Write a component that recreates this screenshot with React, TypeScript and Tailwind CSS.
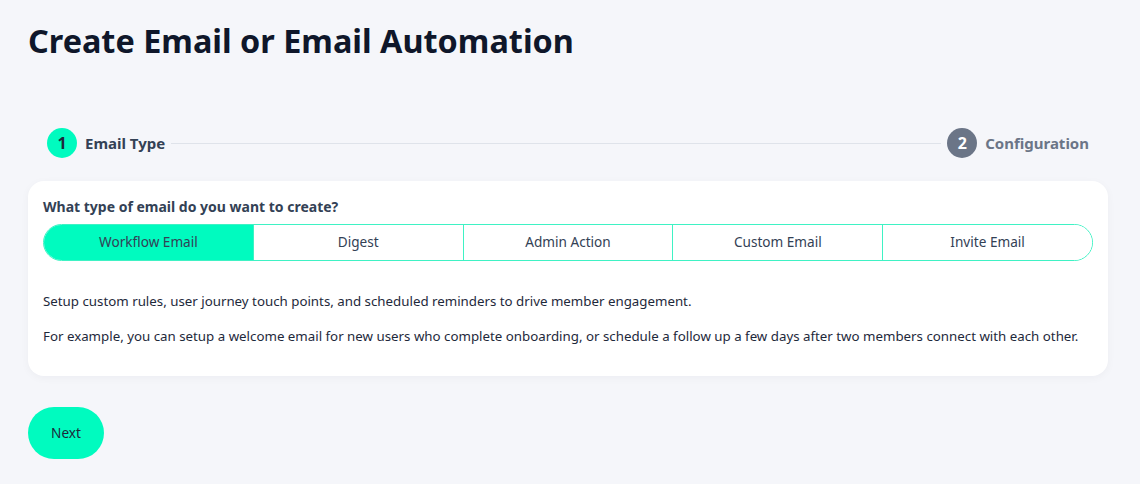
const TYPES = ["Workflow Email", "Digest", "Admin Action", "Custom Email", "Invite Email"];

export default function App() {
  const active = 0;

  return (
    <div className="min-h-screen bg-[#f5f6fa] pl-7 pr-8 pt-[18px] font-['Noto_Sans',sans-serif]">
      <h1 className="text-[32.4px] leading-[44px] font-bold text-[#0f172a]">Create Email or Email Automation</h1>

      {/* Stepper */}
      <div className="mt-[66px] flex items-center px-[19px]">
        <div className="flex items-center gap-2">
          <div className="h-[30px] w-[30px] rounded-full bg-[#00fbbf] flex items-center justify-center text-[16px] font-bold text-[#1e293b]">1</div>
          <span className="text-[15px] font-bold text-[#334155]">Email Type</span>
        </div>
        <div className="mx-1.5 h-px flex-1 bg-[#dfe3ea]" />
        <div className="flex items-center gap-2">
          <div className="h-[30px] w-[30px] rounded-full bg-[#6b7587] flex items-center justify-center text-[16px] font-bold text-white">2</div>
          <span className="text-[15px] font-bold text-[#6b7587]">Configuration</span>
        </div>
      </div>

      {/* Card */}
      <div className="mt-[23px] rounded-2xl bg-white px-[15px] pt-[16px] pb-[30px] shadow-[0_2px_8px_rgba(15,23,42,0.04)]">
        <p className="text-[14px] leading-5 font-bold text-[#334155]">What type of email do you want to create?</p>
        <div className="mt-[7px] flex h-[37px] rounded-full border border-[#3ff2c4] overflow-hidden">
          {TYPES.map((t, i) => (
            <button
              key={t}
              className={`flex-1 text-[13.6px] text-[#334155] ${i > 0 ? "border-l border-[#3ff2c4]" : ""} ${
                i === active ? "bg-[#00fbbf]" : "bg-white"
              }`}
            >
              {t}
            </button>
          ))}
        </div>
        <p className="mt-[30px] text-[13.3px] leading-5 text-[#1e293b]">
          Setup custom rules, user journey touch points, and scheduled reminders to drive member engagement.
        </p>
        <p className="mt-[15px] text-[13.3px] leading-5 text-[#1e293b]">
          For example, you can setup a welcome email for new users who complete onboarding, or schedule a follow up a few days after two members connect with each other.
        </p>
      </div>

      <button className="mt-[31px] h-[52px] w-[76px] rounded-full bg-[#00fbbf] text-[13.6px] text-[#1e293b]">Next</button>
    </div>
  );
}
